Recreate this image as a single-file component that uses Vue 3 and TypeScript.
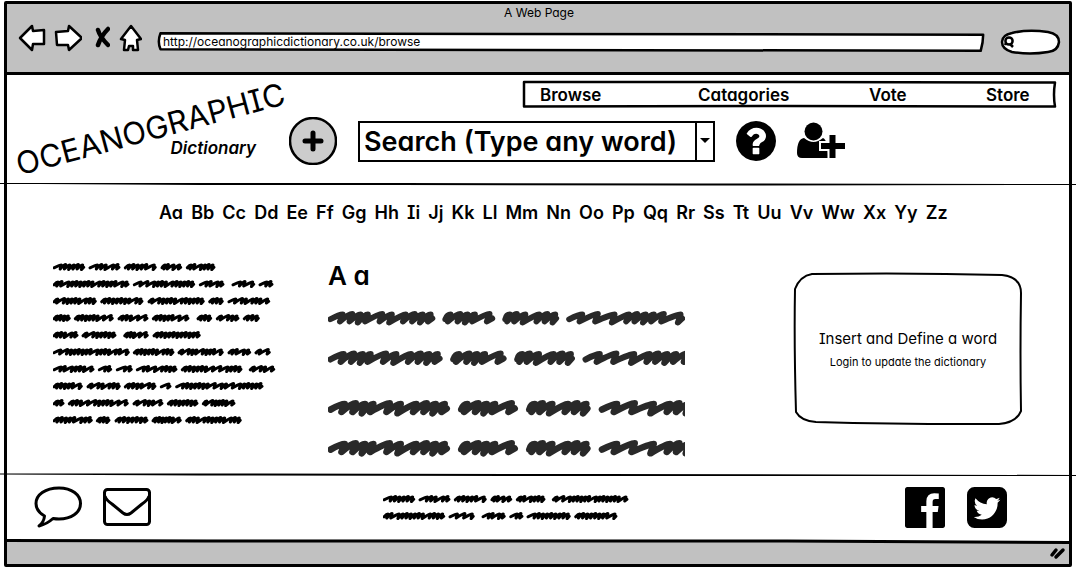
<script setup lang="ts">
import { ref } from 'vue'

type Span = [number, number]

const address = ref('http://oceanographicdictionary.co.uk/browse')
const word = ref('')

const navItems = ['Browse', 'Catagories', 'Vote', 'Store']
const letters = Array.from({ length: 26 }, (_, i) => String.fromCharCode(65 + i) + String.fromCharCode(97 + i))

/* Placeholder text: every word is one zigzag stroke through its peaks. */
function zigzag(start: number, end: number, peaks: number[], cy: number, amp: number, lean: number): string {
  let d = `M${start.toFixed(1)} ${(cy + amp * 0.3).toFixed(1)}`
  peaks.forEach((p, i) => {
    const top = cy - amp * (i % 3 === 1 ? 0.95 : 0.8)
    const low = cy + amp * (i % 3 === 2 ? 1.05 : 0.8)
    d += ` Q${(p - lean).toFixed(1)} ${top.toFixed(1)} ${p.toFixed(1)} ${top.toFixed(1)}`
    d += ` L${(p - lean * 0.8).toFixed(1)} ${low.toFixed(1)}`
  })
  return d + ` L${end.toFixed(1)} ${(cy + amp * 0.1).toFixed(1)}`
}

function smallWord([a, b]: Span, cy: number, seed: number): string {
  const start = a / 3 + 1
  const end = b / 3 - 1
  const steps: number[] = []
  let total = 0
  let n = seed
  while (total < end - start - 3) {
    n = (n * 73 + 41) % 997
    const s = n % 4 === 0 ? 7 : 4
    steps.push(s)
    total += s
  }
  const k = (end - start - 1) / total
  let x = start
  const peaks = steps.map((s) => (x += s * k))
  return zigzag(start, end, peaks, cy, 2.5, 1.6)
}

function smallText(rows: Span[][]): string[] {
  return rows.flatMap((row, r) => row.map((w, i) => smallWord(w, 5 + r * 17, r * 31 + i * 17 + 7)))
}

const asideText = smallText([
  [[0, 95], [108, 201], [214, 310], [324, 386], [400, 486]],
  [[0, 228], [241, 425], [439, 513], [537, 605], [618, 660]],
  [[0, 130], [143, 270], [285, 454], [467, 511], [525, 650]],
  [[0, 52], [64, 181], [195, 285], [298, 408], [432, 476], [490, 558], [571, 619]],
  [[0, 75], [87, 189], [212, 286], [300, 442]],
  [[0, 229], [241, 363], [375, 511], [525, 593], [606, 652]],
  [[0, 123], [136, 176], [190, 238], [250, 372], [385, 567], [589, 665]],
  [[0, 88], [102, 202], [214, 309], [322, 354], [368, 630]],
  [[0, 33], [46, 226], [240, 330], [343, 435], [448, 546]],
  [[0, 118], [130, 171], [186, 285], [297, 385], [398, 565]],
])

const footerText = smallText([
  [[0, 95], [108, 201], [214, 310], [324, 386], [400, 486], [508, 735]],
  [[0, 185], [198, 274], [297, 367], [380, 420], [432, 562], [575, 702]],
])

const largeWords = [
  { start: 8, end: 356, peaks: [50, 83, 111, 136, 185, 218, 265, 296, 323, 350] },
  { start: 400, end: 560, peaks: [418, 451, 476, 501, 551] },
  { start: 604, end: 778, peaks: [620, 644, 673, 720, 748, 775] },
  { start: 822, end: 1208, peaks: [867, 920, 977, 1026, 1054, 1083, 1111, 1145, 1202] },
]
const largeRows = [
  { y: 10, scale: 0.88 },
  { y: 50, scale: 0.94 },
  { y: 100, scale: 1 },
  { y: 140, scale: 1 },
].map((r) => ({
  width: 6.6 * r.scale,
  d: largeWords
    .map((w) => {
      const k = r.scale / 3
      return zigzag(w.start * k, w.end * k, w.peaks.map((p) => p * k), r.y, 5 * r.scale, 4 * r.scale)
    })
    .join(' '),
}))
</script>

<template>
  <div class="page">
    <div class="window">
      <div class="chrome">
        <div class="title">A Web Page</div>
        <div class="toolbar">
          <button class="tool" aria-label="Back">
            <svg width="28" height="28" viewBox="0 0 28 28"><path d="M2 14 14 2 15 7 26 6 26 20 15 20 14 26Z" class="shape" /></svg>
          </button>
          <button class="tool" aria-label="Forward">
            <svg width="28" height="28" viewBox="0 0 28 28"><path d="M2 8 14 7 15 2 28 14 15 26 14 21 3 21Z" class="shape" /></svg>
          </button>
          <button class="tool" aria-label="Stop">
            <svg width="20" height="28" viewBox="0 0 20 28"><path d="M8 6 Q10 13 18 21M18 5 Q11 12 8 21" class="cross" /></svg>
          </button>
          <button class="tool" aria-label="Home">
            <svg width="24" height="28" viewBox="0 0 24 28"><path d="M13 2 23 15 19 16 20 26 15 26 15 22 11 22 10 26 6 26 7 16 3 15Z" class="shape" /></svg>
          </button>
          <label class="address">
            <svg class="outline" viewBox="0 0 100 100" preserveAspectRatio="none"><path d="M.3 6 Q50 1 99.900 14 Q99.900 50 99.600 94 Q50 92 .3 86 Q-.1 50 .3 6Z" /></svg>
            <input v-model="address" type="text" aria-label="Address" />
          </label>
          <label class="pill">
            <svg class="outline" viewBox="0 0 60 26" preserveAspectRatio="none"><path d="M12 4 Q28 0 48 3 Q59 5 59 13 Q58 22 48 23 Q30 26 12 23 Q2 20 2 13 Q2 6 12 4Z" /></svg>
            <svg class="lens" width="12" height="14" viewBox="0 0 12 14"><circle cx="6" cy="6" r="3.600" /><path d="M3 8 2 10M7 9 10 12" /></svg>
            <input type="search" aria-label="Web search" />
          </label>
        </div>
      </div>
      <div class="bar-line"></div>

      <header class="header">
        <div class="brand">
          <h1>OCEANOGRAPHIC</h1>
          <p>Dictionary</p>
        </div>
        <div class="actions">
          <nav class="nav">
            <svg class="outline" viewBox="0 0 533 27" preserveAspectRatio="none"><path d="M1 1 L270 1 532 1.500 Q530 14 532 25.500 L260 25 1 25.500Z" /></svg>
            <a v-for="item in navItems" :key="item" href="#">{{ item }}</a>
          </nav>
          <div class="tools">
            <button class="add" aria-label="Add word">
              <svg width="48" height="48" viewBox="0 0 48 48"><circle cx="24" cy="24" r="23" /><path d="M24 16V32M16 24H32" /></svg>
            </button>
            <div class="search">
              <input v-model="word" type="text" placeholder="Search (Type any word)" aria-label="Search" />
              <button aria-label="Show words"><svg width="10" height="6" viewBox="0 0 10 6"><path d="M0 0H10L5 5Z" /></svg></button>
            </div>
            <button class="icon" aria-label="Help">
              <svg width="40" height="40" viewBox="128 128 1536 1536"><path d="M1024 1376v-192q0-14-9-23t-23-9h-192q-14 0-23 9t-9 23v192q0 14 9 23t23 9h192q14 0 23-9t9-23zm256-672q0-88-55.500-163t-138.500-116-170-41q-243 0-371 213-15 24 8 42l132 100q7 6 19 6 16 0 25-12 53-68 86-92 34-24 86-24 48 0 85.500 26t37.500 59q0 38-20 61t-68 45q-63 28-115.500 86.500t-52.500 125.500v36q0 14 9 23t23 9h192q14 0 23-9t9-23q0-19 21.500-49.500t54.500-49.500q32-18 49-28.500t46-35 44.500-48 28-60.500 12.500-81zm384 192q0 209-103 385.500t-279.500 279.500-385.500 103-385.500-103-279.500-279.500-103-385.500 103-385.500 279.500-279.500 385.500-103 385.500 103 279.500 279.500 103 385.500z" /></svg>
            </button>
            <button class="icon" aria-label="Register">
              <svg width="48" height="38" viewBox="0 0 48 38">
                <path d="M0 31 Q0 17 7 16 Q12 20 16.500 20 Q21 20 26 16 Q31 18 31 36H5Q0 36 0 31Z" />
                <circle cx="16.500" cy="9.500" r="9" />
                <path d="M35.500 11V38M22 24H48" class="plus-gap" />
                <path d="M35.500 13V36M24 24H48" class="plus" />
              </svg>
            </button>
          </div>
        </div>
      </header>
      <svg class="rule" viewBox="0 0 1076 4" preserveAspectRatio="none"><path d="M0 1 L400 1 700 1.500 1076 2 1076 3 700 3.500 400 3 200 3 40 2 0 2Z" /></svg>

      <main class="main">
        <nav class="letters" aria-label="Letters">
          <a v-for="l in letters" :key="l" href="#">{{ l }}</a>
        </nav>
        <div class="columns">
          <aside>
            <svg class="small" width="223" height="164" viewBox="0 0 223 164"><path v-for="(d, i) in asideText" :key="i" :d="d" /></svg>
          </aside>
          <article>
            <h2>A a</h2>
            <svg class="large" width="357" height="150" viewBox="0 0 357 150"><path v-for="(r, i) in largeRows" :key="i" :d="r.d" :stroke-width="r.width" /></svg>
          </article>
          <section class="card">
            <svg class="outline" viewBox="0 0 228 152" preserveAspectRatio="none"><path d="M18 1 Q120 -.5 208 2 Q227 4 227 20 Q226 80 227 138 Q222 150 205 151 Q110 151.500 22 149 Q7 148 2 139 Q0 70 1 16 Q6 3 18 1Z" /></svg>
            <h3>Insert and Define a word</h3>
            <p>Login to update the dictionary</p>
          </section>
        </div>
      </main>
      <svg class="rule" viewBox="0 0 1076 4" preserveAspectRatio="none"><path d="M0 .5 L200 .5 600 1 1076 2 1076 3 600 3 200 2.500 0 1.500Z" /></svg>

      <footer class="footer">
        <div class="contact">
          <button class="icon" aria-label="Comment">
            <svg width="48" height="42" viewBox="0 0 48 42"><path d="M25 2 C38 2 46.500 9 46.500 17.500 C46.500 27 37 33 25 33 Q22 33 19 32.500 Q13 38 5 40 Q10 36 10.500 30 Q2 25 2 17.500 C2 9 11 2 25 2Z" /></svg>
          </button>
          <button class="icon" aria-label="Mail">
            <svg width="48" height="38" viewBox="0 0 48 38"><rect x="1.500" y="1.500" width="45" height="35" rx="3" /><path d="M2 8 Q3 12 9 16 L20 25 Q24 28 28 25 L39 16 Q45 12 46 8" /></svg>
          </button>
        </div>
        <svg class="small" width="247" height="27" viewBox="0 0 247 27"><path v-for="(d, i) in footerText" :key="i" :d="d" /></svg>
        <div class="social">
          <a href="#" aria-label="Facebook">
            <svg width="40" height="41" viewBox="128 128 1536 1536" preserveAspectRatio="none"><path d="M1579 128q35 0 60 25t25 60v1366q0 35-25 60t-60 25h-391v-595h199l30-232h-229v-148q0-56 23.500-84t91.500-28l122-1v-207q-63-9-178-9-136 0-217.500 80t-81.500 226v171h-200v232h200v595h-735q-35 0-60-25t-25-60v-1366q0-35 25-60t60-25h1366z" /></svg>
          </a>
          <a href="#" aria-label="Twitter">
            <svg width="40" height="41" viewBox="128 128 1536 1536" preserveAspectRatio="none"><path d="M1408 610q-56 25-121 34 68-40 93-117-65 38-134 51-61-66-153-66-87 0-148.500 61.500t-61.500 148.500q0 29 5 48-129-7-242-65t-192-155q-29 50-29 106 0 114 91 175-47-1-100-26v2q0 75 50 133.500t123 72.500q-29 8-51 8-13 0-39-4 21 63 74.500 104t121.500 42q-116 90-261 90-26 0-50-3 148 94 322 94 112 0 210-35.500t168-95 120.500-137 75-162 24.500-168.500q0-18-1-27 63-45 105-109zm256-194v960q0 119-84.500 203.500t-203.500 84.500h-960q-119 0-203.500-84.500t-84.500-203.500v-960q0-119 84.500-203.500t203.500-84.500h960q119 0 203.500 84.500t84.500 203.500z" /></svg>
          </a>
        </div>
      </footer>
      <div class="status">
        <svg class="edge" viewBox="0 0 1062 5" preserveAspectRatio="none"><path d="M0 0H1062V3L700 1 0 .5Z" class="above" /><path d="M0 0 L200 .5 780 .5 1062 2 1062 5 780 3.500 200 3.500 0 3Z" /></svg>
        <svg class="grip" width="18" height="14" viewBox="0 0 18 14"><path d="M3 9 7 4M7 11 14 4" /></svg>
      </div>
    </div>
  </div>
</template>

<style>
body {
  background: #fff;
}
</style>

<style scoped>
.page {
  padding: 1px 4px;
  overflow: hidden;
  color: #000;
  font-family: Inter, "Open Sans", sans-serif;
  font-feature-settings: "cv08" 1, "cv11" 1;
}
.page * {
  box-sizing: border-box;
}
.window {
  border: 3px solid #000;
  border-radius: 2px;
}
h1, h2, h3, p {
  margin: 0;
}
svg {
  display: block;
}
a {
  color: inherit;
  text-decoration: none;
}
button {
  padding: 0;
  border: 0;
  background: none;
  cursor: pointer;
}
input {
  min-width: 0;
  padding: 0;
  border: 0;
  outline: 0;
  background: none;
  color: #000;
  font-family: inherit;
  font-feature-settings: inherit;
}
.outline {
  position: absolute;
  inset: 0;
  width: 100%;
  height: 100%;
  overflow: visible;
}
.outline path {
  fill: #fff;
  stroke: #000;
  stroke-width: 2px;
  stroke-linejoin: round;
  vector-effect: non-scaling-stroke;
}

.chrome {
  padding: 1px 9px 18px 11px;
  background: #c1c1c1;
}
.title {
  font-size: 12px;
  line-height: 16px;
  text-align: center;
}
.toolbar {
  display: flex;
  align-items: center;
  gap: 8px;
  height: 33px;
}
.shape {
  fill: #fff;
  stroke: #000;
  stroke-width: 2.5px;
  stroke-linejoin: round;
}
.cross {
  fill: none;
  stroke: #000;
  stroke-width: 4.5px;
  stroke-linecap: round;
}
.address {
  position: relative;
  display: flex;
  flex: 1;
  margin-top: 8px;
  margin-left: 8px;
  height: 20px;
}
.address .outline path,
.pill .outline path,
.nav .outline path {
  stroke-width: 2.5px;
}
.address input {
  position: relative;
  flex: 1;
  padding: 0 5px;
  font-size: 12px;
}
.pill {
  position: relative;
  display: flex;
  align-items: center;
  width: 60px;
  height: 26px;
  margin-top: 8px;
  margin-left: 8px;
  padding-left: 3px;
}
.pill input {
  position: relative;
  flex: 1;
}
.lens {
  position: relative;
  flex: none;
  fill: none;
  stroke: #000;
  stroke-width: 2.5px;
}
.bar-line {
  height: 3px;
  background: #000;
}

.header {
  display: flex;
}
.brand {
  display: grid;
  flex: 0 0 282px;
  padding-left: 5px;
}
.brand h1,
.brand p {
  grid-area: 1 / 1;
}
.brand h1 {
  place-self: center start;
  font-size: 31px;
  font-weight: 400;
  line-height: 36px;
  white-space: nowrap;
  transform: rotate(-15deg);
}
.brand p {
  place-self: end;
  padding: 0 33px 25px 0;
  font-size: 17px;
  font-style: italic;
  font-weight: 600;
  line-height: 20px;
}
.actions {
  display: flex;
  flex: 1;
  flex-direction: column;
  gap: 9px;
  padding: 6px 13px 18px 0;
}
.nav {
  position: relative;
  display: grid;
  grid-template-columns: 158fr 171fr 117fr 70fr;
  align-items: center;
  align-self: flex-end;
  width: 533px;
  max-width: 100%;
  height: 27px;
  padding-left: 17px;
}
.nav a {
  position: relative;
  font-size: 17px;
  font-weight: 600;
  line-height: 20px;
}
.tools {
  display: flex;
  align-items: center;
  gap: 21px;
}
.add circle {
  fill: #ccc;
  stroke: #000;
  stroke-width: 2.5px;
}
.add path {
  stroke: #000;
  stroke-width: 5px;
  stroke-linecap: round;
}
.search {
  display: flex;
  flex: 0 1 357px;
  min-width: 0;
  height: 41px;
  border: 2px solid #000;
}
.search input {
  flex: 1;
  width: 0;
  padding-left: 4px;
  font-size: 27px;
  font-weight: 600;
}
.search input::placeholder {
  color: #000;
  opacity: 1;
}
.search button {
  display: grid;
  flex: 0 0 18px;
  place-items: center;
  border-left: 2px solid #000;
}
.plus,
.plus-gap {
  fill: none;
  stroke: #000;
  stroke-width: 6px;
}
.plus-gap {
  stroke: #fff;
  stroke-width: 10px;
}
.rule {
  position: relative;
  width: calc(100% + 14px);
  height: 4px;
  margin: -1px -7px;
}

.letters {
  display: flex;
  justify-content: space-between;
  padding: 18px 121px 39px 152px;
  font-size: 18px;
  font-weight: 600;
  line-height: 20px;
}
.columns {
  display: grid;
  grid-template-columns: 275fr 466fr 228fr;
  align-items: start;
  padding: 0 47px 16px 46px;
}
.small,
.large {
  fill: none;
  stroke: #000;
  stroke-width: 3px;
  stroke-linecap: round;
  stroke-linejoin: round;
}
.large {
  stroke: #292929;
  stroke-width: inherit;
}
.columns h2 {
  margin-bottom: 18px;
  font-size: 26px;
  font-weight: 600;
  line-height: 28px;
}
.card {
  position: relative;
  display: flex;
  flex-direction: column;
  align-items: center;
  justify-content: center;
  gap: 6px;
  height: 152px;
  margin-top: 11px;
}
.card h3,
.card p {
  position: relative;
}
.card h3 {
  font-size: 15px;
  font-weight: 400;
  line-height: 20px;
}
.card p {
  font-size: 11px;
  line-height: 14px;
}

.footer {
  display: grid;
  grid-template-columns: 349fr 522fr auto;
  align-items: center;
  padding: 10px 62px 11px 27px;
}
.contact,
.social {
  display: flex;
  align-items: center;
  gap: 21px;
}
.social {
  gap: 22px;
}
.contact path,
.contact rect {
  fill: none;
  stroke: #000;
  stroke-width: 3px;
  stroke-linejoin: round;
}
.status {
  padding-bottom: 4px;
  background: #c1c1c1;
}
.edge {
  width: 100%;
  height: 5px;
}
.edge .above {
  fill: #fff;
}
.grip {
  margin: 2px 2px 0 auto;
  fill: none;
  stroke: #000;
  stroke-width: 3.5px;
  stroke-linecap: round;
}
</style>
